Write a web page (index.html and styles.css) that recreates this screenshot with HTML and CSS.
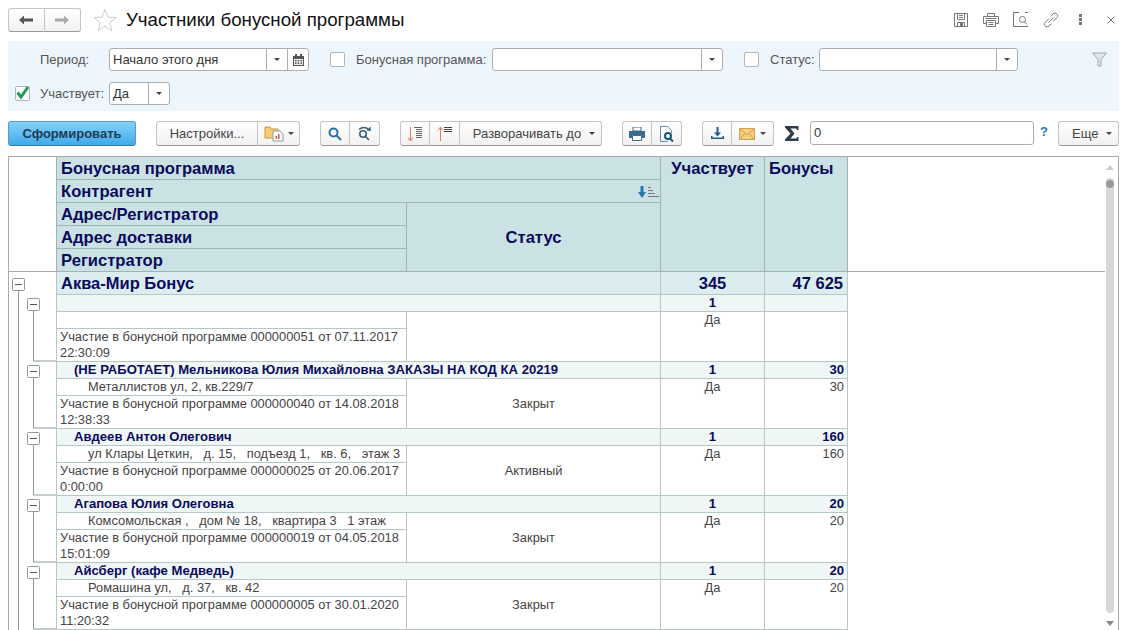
FILE: index.html
```html
<!DOCTYPE html>
<html lang="ru">
<head>
  <meta charset="UTF-8">
  <title>Участники бонусной программы</title>
  <link rel="stylesheet" href="styles.css">
</head>
<body>
  <header class="title-bar">
    <div class="btn-group nav-group">
      <button class="btn seg"><svg width="16" height="12" viewBox="0 0 16 12"><path d="M1 6l5-4.500V4.500h9v3H6v3z" fill="#555"/></svg></button>
      <button class="btn seg"><svg width="16" height="12" viewBox="0 0 16 12"><path d="M15 6l-5-4.500V4.500H1v3h9v3z" fill="#aaa"/></svg></button>
    </div>
    <svg class="star" width="24" height="24" viewBox="0 0 24 24"><path d="M12 1.500l3 7.600 8 .5-6.200 5.200 2 8L12 18.200l-6.800 4.600 2-8L1 9.600l8-.5z" fill="#fff" stroke="#ccc"/></svg>
    <h1>Участники бонусной программы</h1>
    <div class="window-icons">
      <svg width="16" height="16" viewBox="0 0 16 16" fill="none" stroke="#777"><path d="M1.500 1.500h13v13h-13z"/><path d="M4.500 1.500v6h7v-6M6 3.500h4M6 5.500h4M4.500 14.500v-4h7v4"/><path d="M7 11h3v3H7z" fill="#777" stroke="none"/></svg>
      <svg width="16" height="16" viewBox="0 0 16 16" fill="none" stroke="#777"><path d="M4.500 4.500v-3h7v3M3.500 11.500h-3v-7h15v7h-3"/><path d="M3.500 8.500h9v6h-9zM5.500 10.500h5M5.500 12.500h5M2.500 6.500h11"/></svg>
      <svg width="16" height="16" viewBox="0 0 16 16" fill="none" stroke="#777"><path d="M6 .5H.5v14H15M15 .5h-3"/><circle cx="9.500" cy="7.500" r="3"/><path d="M11.500 10l2.500 2.500"/></svg>
      <svg width="16" height="16" viewBox="0 0 16 16" fill="none" stroke="#777"><path d="M6 6.500L2 10.500c-2 2.500 1.500 6 4 3.500l2.500-2.500M10 9.500l4-4c2-2.500-1.500-6-4-3.500L7.500 4.500M5.500 10.500l5-5"/></svg>
      <svg class="kebab" width="3" height="11" viewBox="0 0 3 11"><path d="M0 0h3v3H0zM0 4h3v3H0zM0 8h3v3H0z" fill="#777"/></svg>
      <svg class="close" width="8" height="8" viewBox="0 0 8 8"><path d="M.5.500l7 7M7.500.500l-7 7" stroke="#777" fill="none"/></svg>
    </div>
  </header>

  <section class="filters">
    <div class="filter-row">
      <span class="check-slot"></span>
      <label class="lbl lbl-period">Период:</label>
      <div class="field field-period">
        <span class="field-text">Начало этого дня</span>
        <span class="field-btn"><i class="caret"></i></span>
        <span class="field-btn"><svg width="11" height="12" viewBox="0 0 11 12"><path d="M0 2h11v10H0z" fill="#555"/><path d="M1 5h9v6H1z" fill="#eee"/><path d="M2 0h2v3H2zM7 0h2v3H7z" fill="#555"/><path d="M2 6h1.500v1.500H2zM4.700 6h1.500v1.500H4.700zM7.500 6H9v1.500H7.500zM2 8.500h1.500V10H2zM4.700 8.500h1.500V10H4.700zM7.500 8.500H9V10H7.500z" fill="#555"/></svg></span>
      </div>
      <span class="check check-program"></span>
      <label class="lbl lbl-program">Бонусная программа:</label>
      <div class="field field-program">
        <span class="field-text"></span>
        <span class="field-btn"><i class="caret"></i></span>
      </div>
      <span class="check check-status"></span>
      <label class="lbl lbl-status">Статус:</label>
      <div class="field field-status">
        <span class="field-text"></span>
        <span class="field-btn"><i class="caret"></i></span>
      </div>
      <svg class="funnel" width="15" height="15" viewBox="0 0 15 15"><path d="M.5 1h14L9 7.500V14H6V7.500z" fill="#dfe5ea" stroke="#a4a9ad"/></svg>
    </div>
    <div class="filter-row">
      <span class="check-slot"><span class="check check-on"><svg width="15" height="14" viewBox="0 0 15 14"><path d="M2.500 6.500l3.500 4.500 7-10" fill="none" stroke="#1f9a57" stroke-width="3"/></svg></span></span>
      <label class="lbl lbl-period">Участвует:</label>
      <div class="field field-yes">
        <span class="field-text">Да</span>
        <span class="field-btn"><i class="caret"></i></span>
      </div>
    </div>
  </section>

  <nav class="toolbar">
    <button class="btn btn-primary">Сформировать</button>
    <div class="btn-group settings-group">
      <button class="btn seg seg-settings">Настройки...</button>
      <button class="btn seg seg-variant">
        <svg width="20" height="17" viewBox="0 0 20 17"><path d="M1 2h5l1 2h7v9H1z" fill="#f3cf78" stroke="#c69a3c"/><path d="M9 6h7l3 3v7H9z" fill="#fff" stroke="#999"/><path d="M11.500 14v-3h1.500v3zM14 14v-5h1.500v5z" fill="#d2584a"/></svg>
        <i class="caret"></i>
      </button>
    </div>
    <div class="btn-group search-group">
      <button class="btn seg"><svg width="14" height="14" viewBox="0 0 14 14" fill="none" stroke="#2b6f9e" stroke-width="2"><circle cx="5.500" cy="5.500" r="4"/><path d="M8.500 8.500l4.500 4.500"/></svg></button>
      <button class="btn seg"><svg width="15" height="15" viewBox="0 0 15 15" fill="none" stroke="#3b5f78" stroke-width="1.600"><circle cx="6" cy="8" r="3.200"/><path d="M8.500 10.500l3.500 3.500M2 3.500C5 1 9 1 11.500 3.500"/><path d="M9.500 4.500L14 5l-.5-4.500z" fill="#3b5f78" stroke="none"/></svg></button>
    </div>
    <div class="btn-group expand-group">
      <button class="btn seg"><svg width="16" height="16" viewBox="0 0 16 16" fill="none"><path d="M3.500 1v13M1 11.500l2.500 3.500 2.500-3.500" stroke="#d9805c"/><path d="M7 1.500h8M9 3.500h6M9 5.500h6M9 7.500h6M9 9.500h6M9 11.500h6" stroke="#666"/></svg></button>
      <button class="btn seg"><svg width="16" height="16" viewBox="0 0 16 16" fill="none"><path d="M3.500 15V2M1 4.500L3.500 1 6 4.500" stroke="#d9805c"/><path d="M7 1.500h8M7 3.500h8M7 5.500h8" stroke="#444"/></svg></button>
      <button class="btn seg seg-expand">Разворачивать до <i class="caret"></i></button>
    </div>
    <div class="btn-group print-group">
      <button class="btn seg"><svg width="16" height="14" viewBox="0 0 16 14"><path d="M4 0h8v4H4z" fill="#fff" stroke="#3a6a8c"/><path d="M0 4h16v7h-3V8H3v3H0z" fill="#3a6a8c"/><path d="M3.500 8.500h9v5h-9z" fill="#fff" stroke="#3a6a8c"/></svg></button>
      <button class="btn seg"><svg width="16" height="16" viewBox="0 0 16 16" fill="none"><path d="M9 15.500H1.500v-15h7l4 4V7" stroke="#6d8da3"/><circle cx="9" cy="10" r="3" stroke="#15557f" stroke-width="2"/><path d="M11 12.500l3 3" stroke="#15557f" stroke-width="2"/></svg></button>
    </div>
    <div class="btn-group send-group">
      <button class="btn seg"><svg width="15" height="14" viewBox="0 0 15 14"><path d="M6.500 0h2v5.500H11l-3.500 4-3.500-4h2.500z" fill="#1d5f8c"/><path d="M1 9v3h13V9h-1.500v1.500h-10V9z" fill="#1d5f8c"/></svg></button>
      <button class="btn seg seg-mail">
        <svg width="16" height="12" viewBox="0 0 16 12"><path d="M.5.500h15v11H.5z" fill="#f6cf7c" stroke="#cfa048"/><path d="M.5.500L8 7l7.500-6.500M.5 11.500L6 5.500M15.500 11.500L10 5.500" fill="none" stroke="#cfa048"/></svg>
        <i class="caret"></i>
      </button>
    </div>
    <svg class="sigma" width="14" height="15" viewBox="0 0 14 15"><path d="M0 0h13.500v4H12l-.5-1.500H5.500L9.500 7.500 5.500 12.500h6l.5-1.500h1.500v4H0v-1.500L5.500 7.500 0 1.500z" fill="#2d3c48"/></svg>
    <div class="field field-sum"><span class="field-text">0</span></div>
    <span class="hint">?</span>
    <button class="btn btn-more">Еще <i class="caret"></i></button>
  </nav>

  <main class="report">
    <div class="report-scroll">
      <table class="grid">
        <colgroup>
          <col class="c-tree"><col class="c-main"><col class="c-status"><col class="c-part"><col class="c-bonus"><col>
        </colgroup>
        <thead>
          <tr class="h-row">
            <th rowspan="5" class="h-corner"></th>
            <th colspan="2">Бонусная программа</th>
            <th rowspan="5" class="h-top h-part">Участвует</th>
            <th rowspan="5" class="h-top">Бонусы</th>
            <th rowspan="5" class="h-blank"></th>
          </tr>
          <tr class="h-row">
            <th colspan="2">
              <div class="h-sort">Контрагент
                <svg width="21" height="12" viewBox="0 0 21 12"><path d="M2.500 0h3v6H8l-4 6-4-6h2.500z" fill="#2a78b0"/><path d="M10 1.500h3M10 4.500h5M10 7.500h7M10 10.500h11" stroke="#777" fill="none"/></svg>
              </div>
            </th>
          </tr>
          <tr class="h-row">
            <th>Адрес/Регистратор</th>
            <th rowspan="3" class="h-center">Статус</th>
          </tr>
          <tr class="h-row"><th>Адрес доставки</th></tr>
          <tr class="h-row"><th>Регистратор</th></tr>
        </thead>
        <tbody>
          <tr class="r-top">
            <td rowspan="16" class="tree">
              <svg width="47" height="358" viewBox="0 0 47 358" fill="none">
                <path class="tree-line" d="M9.500 18v340M24.500 38v51h23M24.500 105v51h23M24.500 172v51h23M24.500 239v51h23M24.500 306v51h23"/>
                <g class="tree-box">
                  <rect x="3.500" y="6.500" width="12" height="12" rx="1"/><path d="M6 12.500h7"/>
                  <rect x="18.500" y="26.500" width="12" height="12" rx="1"/><path d="M21 32.500h7"/>
                  <rect x="18.500" y="93.500" width="12" height="12" rx="1"/><path d="M21 99.500h7"/>
                  <rect x="18.500" y="160.500" width="12" height="12" rx="1"/><path d="M21 166.500h7"/>
                  <rect x="18.500" y="227.500" width="12" height="12" rx="1"/><path d="M21 233.500h7"/>
                  <rect x="18.500" y="294.500" width="12" height="12" rx="1"/><path d="M21 300.500h7"/>
                </g>
              </svg>
            </td>
            <td colspan="2">Аква-Мир Бонус</td>
            <td class="num-c">345</td>
            <td class="num-r">47 625</td>
            <td rowspan="16" class="blank"></td>
          </tr>
          <tr class="r-group r-first">
            <td colspan="2"></td><td class="num-c">1</td><td class="num-r"></td>
          </tr>
          <tr class="r-addr r-first-addr">
            <td></td>
            <td rowspan="2" class="status"></td>
            <td rowspan="2" class="part">Да</td>
            <td rowspan="2" class="sum"></td>
          </tr>
          <tr class="r-doc"><td>Участие в бонусной программе 000000051 от 07.11.2017 22:30:09</td></tr>

          <tr class="r-group">
            <td colspan="2" class="indent">(НЕ РАБОТАЕТ) Мельникова Юлия Михайловна ЗАКАЗЫ НА КОД КА 20219</td><td class="num-c">1</td><td class="num-r">30</td>
          </tr>
          <tr class="r-addr">
            <td class="addr">Металлистов ул, 2, кв.229/7</td>
            <td rowspan="2" class="status">Закрыт</td>
            <td rowspan="2" class="part">Да</td>
            <td rowspan="2" class="sum">30</td>
          </tr>
          <tr class="r-doc"><td>Участие в бонусной программе 000000040 от 14.08.2018 12:38:33</td></tr>

          <tr class="r-group">
            <td colspan="2" class="indent">Авдеев Антон Олегович</td><td class="num-c">1</td><td class="num-r">160</td>
          </tr>
          <tr class="r-addr">
            <td class="addr">ул Клары Цеткин,&nbsp;&nbsp; д. 15,&nbsp;&nbsp; подъезд 1,&nbsp;&nbsp; кв. 6,&nbsp;&nbsp; этаж 3</td>
            <td rowspan="2" class="status">Активный</td>
            <td rowspan="2" class="part">Да</td>
            <td rowspan="2" class="sum">160</td>
          </tr>
          <tr class="r-doc"><td>Участие в бонусной программе 000000025 от 20.06.2017 0:00:00</td></tr>

          <tr class="r-group">
            <td colspan="2" class="indent">Агапова Юлия Олеговна</td><td class="num-c">1</td><td class="num-r">20</td>
          </tr>
          <tr class="r-addr">
            <td class="addr">Комсомольская ,&nbsp;&nbsp; дом № 18,&nbsp;&nbsp; квартира 3&nbsp;&nbsp; 1 этаж</td>
            <td rowspan="2" class="status">Закрыт</td>
            <td rowspan="2" class="part">Да</td>
            <td rowspan="2" class="sum">20</td>
          </tr>
          <tr class="r-doc"><td>Участие в бонусной программе 000000019 от 04.05.2018 15:01:09</td></tr>

          <tr class="r-group">
            <td colspan="2" class="indent">Айсберг (кафе Медведь)</td><td class="num-c">1</td><td class="num-r">20</td>
          </tr>
          <tr class="r-addr">
            <td class="addr">Ромашина ул,&nbsp;&nbsp; д. 37,&nbsp;&nbsp; кв. 42</td>
            <td rowspan="2" class="status">Закрыт</td>
            <td rowspan="2" class="part">Да</td>
            <td rowspan="2" class="sum">20</td>
          </tr>
          <tr class="r-doc"><td>Участие в бонусной программе 000000005 от 30.01.2020 11:20:32</td></tr>
        </tbody>
      </table>
    </div>
    <div class="scrollbar">
      <i class="arrow-up"></i>
      <div class="track"><div class="thumb"></div></div>
      <i class="arrow-down"></i>
    </div>
  </main>
</body>
</html>
```

FILE: styles.css
```css
* { box-sizing: border-box; }
html, body { margin: 0; height: 630px; overflow: hidden; }
body { font-family: "Liberation Sans", Arial, sans-serif; font-size: 13px; color: #333; background: #fff; display: flex; flex-direction: column; }

/* title */
.title-bar { display: flex; align-items: center; height: 41px; padding: 0 13px 2px 8px; flex: none; }
.nav-group { height: 24px; }
.nav-group .seg { width: 36.5px; }
.star { margin-left: 12px; }
h1 { margin: 0 0 0 9px; font-size: 18.7px; font-weight: normal; color: #111; }
.window-icons { margin-left: auto; display: flex; align-items: center; gap: 14px; }
.kebab { margin-left: 6px; }
.close { margin-left: 11px; }

/* buttons */
.btn { font: 13px "Liberation Sans", Arial, sans-serif; color: #444; height: 25px; padding: 0; background: linear-gradient(#fff, #f1f1f1); border: 1px solid #c4c4c4; border-bottom-color: #999; border-radius: 3px; display: inline-flex; align-items: center; justify-content: center; }
.btn-group { display: flex; }
.btn-group .seg { border-radius: 0; border-left-width: 0; height: 100%; }
.btn-group .seg:first-child { border-left-width: 1px; border-radius: 3px 0 0 3px; }
.btn-group .seg:last-child { border-radius: 0 3px 3px 0; }
.caret { display: inline-block; width: 0; height: 0; border: 3px solid transparent; border-top: 3px solid #444; border-bottom: 0; }

/* filters */
.filters { flex: none; margin: 0 9px 0 8px; height: 70px; background: #eef6fd; padding-top: 7px; }
.filter-row { display: flex; align-items: center; height: 23px; margin-bottom: 11px; }
.check-slot { width: 32px; flex: none; padding-left: 7px; display: flex; }
.check { display: block; width: 15px; height: 15px; flex: none; background: #fff; border: 1px solid #b5b5b5; border-radius: 2px; }
.check-on svg { display: block; margin: -1px; }
.lbl { color: #555; flex: none; }
.lbl-period { width: 69px; }
.lbl-program { width: 136px; margin-left: 11px; }
.lbl-status { width: 49px; margin-left: 11px; }
.field { display: flex; align-items: stretch; height: 23px; flex: none; background: #fff; border: 1px solid #aeaeae; border-radius: 3px; }
.field-text { flex: 1; padding: 3px 3px 0; color: #333; white-space: nowrap; line-height: 16px; }
.field-btn { width: 21px; flex: none; border-left: 1px solid #aeaeae; display: flex; align-items: center; justify-content: center; }
.field-period { width: 200px; margin-right: 21px; }
.field-program { width: 231px; margin-right: 21px; }
.field-status { width: 199px; }
.field-yes { width: 61px; }
.funnel { margin-left: 74px; }

/* toolbar */
.toolbar { flex: none; display: flex; align-items: flex-start; height: 35px; margin-top: 10px; padding: 0 9px 0 8px; }
.toolbar .btn-group { height: 25px; }
.btn-primary { width: 128px; font-weight: bold; color: #1d3b55; background: linear-gradient(#84d3fa, #3fa9ea); border-color: #5c9cc4; border-bottom-color: #3b7ba3; }
.settings-group { margin-left: 20px; }
.seg-settings { width: 102px; }
.seg-variant { width: 42px; gap: 4px; }
.search-group { margin-left: 20px; }
.search-group .seg { width: 30px; }
.expand-group { margin-left: 20px; }
.expand-group .seg { width: 30px; }
.expand-group .seg-expand { width: 142px; gap: 8px; padding-left: 7px; }
.print-group { margin-left: 20px; }
.print-group .seg { width: 30px; }
.send-group { margin-left: 20px; }
.send-group .seg { width: 30px; }
.send-group .seg-mail { width: 42px; gap: 5px; }
.sigma { margin: 5px 11px 0 11px; flex: none; }
.field-sum { width: 224px; height: 24px; }
.hint { width: 24px; text-align: left; padding: 3px 0 0 6px; color: #2a78b0; font-weight: bold; font-size: 13px; flex: none; }
.btn-more { width: 61px; gap: 8px; justify-content: flex-start; padding-left: 13px; }

/* report */
.report { flex: 1; min-height: 0; margin: 0 9px 0 8px; border: 1px solid #aaa; border-bottom: 0; display: flex; overflow: hidden; }
.report-scroll { width: 1096px; flex: none; overflow: hidden; }
.grid { width: 1096px; table-layout: fixed; border-collapse: separate; border-spacing: 0; font-size: 12.85px; }
.c-tree { width: 48px; }
.c-main { width: 350px; }
.c-status { width: 254px; }
.c-part { width: 104px; }
.c-bonus { width: 83px; }
.grid th { background: #cbe2e5; color: #0b0b5c; font-size: 16.6px; font-weight: bold; text-align: left; padding: 1px 4px 0; border-right: 1px solid #a0b4b5; border-bottom: 1px solid #a0b4b5; line-height: 20px; }
.h-row { height: 23px; }
.grid th.h-corner, .grid th.h-blank { background: #fff; border-right: 0; border-bottom-color: #aaa; }
.grid th.h-corner { border-right: 1px solid #a0b4b5; }
.grid th.h-top { vertical-align: top; padding-top: 2px; }
.grid th.h-part { text-align: center; }
.grid th.h-center { text-align: center; }
.h-sort { display: flex; align-items: center; justify-content: space-between; margin-right: -3px; }
.grid td { padding: 0 3px; border-right: 1px solid #b5c8c6; border-bottom: 1px solid #b5c8c6; vertical-align: top; color: #444; line-height: 16px; overflow: hidden; }
.grid td.tree { padding: 0; border-bottom: 0; background: #fff; }
.tree svg { display: block; }
.tree-line { stroke: #8d9a9a; }
.tree-box rect { fill: #fff; stroke: #8d9a9a; }
.tree-box path { stroke: #555; }
.grid td.blank { border: 0; padding: 0; background: #fff; }

.r-top { height: 23px; }
.r-top td { background: #dcedf0; color: #0b0b5c; font-size: 16.5px; font-weight: bold; line-height: 22px; padding: 0 4px; }
.r-group { height: 17px; }
.r-group td { background: #eef6f6; color: #0b0b5c; font-size: 13.1px; font-weight: bold; }
.r-group .indent { padding-left: 17px; }
.grid td.num-c { text-align: center; }
.grid td.num-r { text-align: right; }
.r-addr { height: 17px; }
.r-doc { height: 33px; }
.grid td.addr { padding-left: 31px; white-space: nowrap; }
.grid td.status { text-align: center; vertical-align: middle; }
.grid td.part { text-align: center; }
.grid td.sum { text-align: right; }

/* scrollbar */
.scrollbar { flex: 1; display: flex; flex-direction: column; align-items: center; padding: 8px 3px 0 0; }
.arrow-up { width: 0; height: 0; border: 4px solid transparent; border-bottom: 5px solid #ccc; border-top: 0; }
.arrow-down { width: 0; height: 0; margin-top: 8px; border: 4px solid transparent; border-top: 5px solid #888; border-bottom: 0; }
.track { width: 8px; height: 435px; margin-top: 8px; background: #d8d8d8; border-radius: 4px; }
.thumb { width: 8px; height: 8px; margin-top: 2px; background: #999; border-radius: 50%; }
```
